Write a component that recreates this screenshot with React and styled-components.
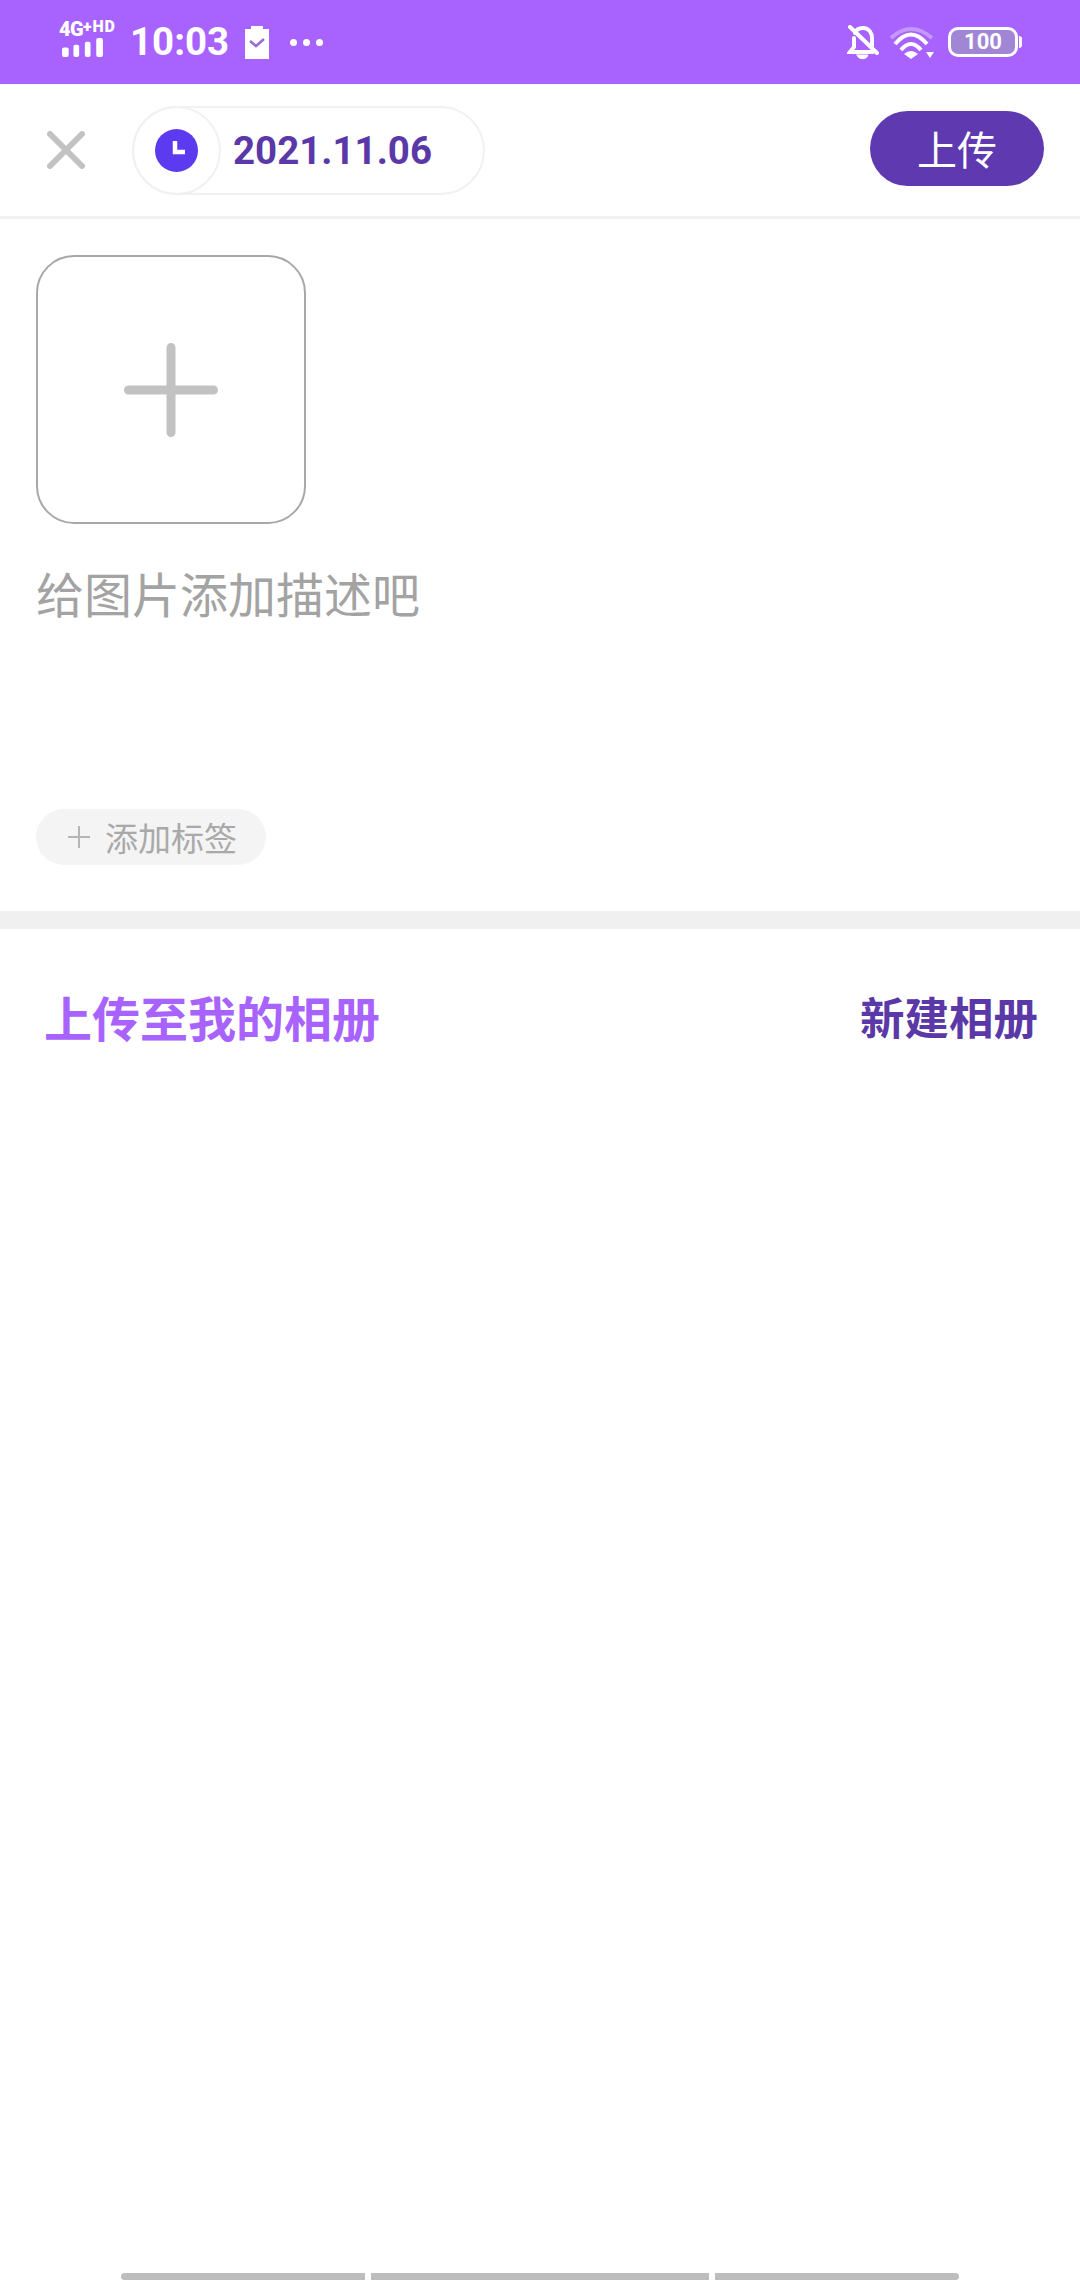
import React from "react";
import styled, { createGlobalStyle } from "styled-components";

const GlobalStyle = createGlobalStyle`
  html, body {
    margin: 0;
    padding: 0;
    background: #fff;
  }
  body {
    font-family: Roboto, "Noto Sans CJK SC", sans-serif;
  }
  * {
    box-sizing: border-box;
  }
`;

const Page = styled.div`
  width: 1080px;
  height: 2280px;
  display: flex;
  flex-direction: column;
  background: #fff;
  overflow: hidden;
`;

const StatusBar = styled.div`
  height: 84px;
  flex: none;
  display: flex;
  align-items: center;
  justify-content: space-between;
  padding: 0 58px 0 60px;
  background: #a862fe;
  color: #fff;
`;

const StatusGroup = styled.div`
  display: flex;
  align-items: center;
`;

const Signal = styled.div`
  width: 58px;
  height: 36px;
  margin: -6px 12px 0 0;
  display: flex;
  flex-direction: column;
`;

const NetworkLabel = styled.div`
  font-size: 20px;
  line-height: 15px;
  font-weight: 900;
  white-space: nowrap;
  letter-spacing: -0.6px;
  margin: 0 0 1px -1px;
  sup {
    font-size: 16px;
    line-height: 12px;
    vertical-align: 4px;
    letter-spacing: 0.8px;
  }
`;

const Time = styled.div`
  font-size: 38.500px;
  line-height: 44px;
  font-weight: 700;
  margin-right: 16px;
`;

const Dots = styled.div`
  display: flex;
  gap: 6px;
  margin-left: 21px;
`;

const Dot = styled.span`
  width: 7px;
  height: 7px;
  border-radius: 50%;
  background: #fff;
`;

const Bell = styled.div`
  display: flex;
  margin-right: 10px;
`;

const Battery = styled.div`
  display: flex;
  align-items: center;
  margin-left: 13px;
`;

const BatteryBody = styled.div`
  width: 70px;
  height: 30px;
  border: 3px solid #fff;
  border-radius: 10px;
  background: linear-gradient(#a186d6, #a186d6) padding-box;
  display: flex;
  align-items: center;
  justify-content: center;
  font-size: 22px;
  line-height: 24px;
  font-weight: 700;
`;

const BatteryNub = styled.span`
  width: 3px;
  height: 12px;
  margin-left: 1px;
  border-radius: 0 3px 3px 0;
  background: #fff;
`;

const Header = styled.div`
  height: 135px;
  flex: none;
  display: flex;
  align-items: center;
  padding: 0 36px 0 47px;
  border-bottom: 3px solid #f0f0f0;
`;

const CloseButton = styled.button`
  width: 38px;
  height: 38px;
  padding: 0;
  margin-right: 47px;
  border: none;
  background: none;
  display: flex;
`;

const DatePill = styled.div`
  width: 353px;
  height: 89px;
  display: flex;
  align-items: center;
  border: 2px solid #f1f1f1;
  border-radius: 45px;
`;

const ClockRing = styled.div`
  width: 89px;
  height: 89px;
  margin: -2px 12px -2px -2px;
  flex: none;
  display: flex;
  align-items: center;
  justify-content: center;
  border: 2px solid #f1f1f1;
  border-radius: 50%;
`;

const DateText = styled.span`
  font-size: 38.500px;
  line-height: 44px;
  padding-top: 2px;
  font-weight: 700;
  color: #5b38a8;
`;

const UploadButton = styled.button`
  width: 174px;
  height: 75px;
  margin: 0 0 3px auto;
  padding: 0;
  border: none;
  border-radius: 38px;
  background: #5f39b0;
  color: #fff;
  font-family: "Noto Sans CJK SC", sans-serif;
  font-size: 40px;
  line-height: 75px;
`;

const Composer = styled.div`
  height: 710px;
  flex: none;
  display: flex;
  flex-direction: column;
  align-items: flex-start;
  padding: 36px 36px 0;
  border-bottom: 18px solid #f0f0f0;
`;

const AddImage = styled.div`
  width: 270px;
  height: 269px;
  display: flex;
  align-items: center;
  justify-content: center;
  border: 2px solid #a8a8a8;
  border-radius: 38px;
`;

const Description = styled.div`
  margin-top: 35px;
  font-family: "Noto Sans CJK SC", sans-serif;
  font-size: 48px;
  line-height: 66px;
  font-weight: 400;
  color: #a3a3a3;
`;

const TagButton = styled.div`
  width: 230px;
  height: 56px;
  margin-top: 184px;
  display: flex;
  align-items: center;
  padding-left: 31px;
  gap: 14px;
  border-radius: 28px;
  background: #f4f4f4;
  font-family: "Noto Sans CJK SC", sans-serif;
  font-size: 33px;
  line-height: 56px;
  color: #a9a9a9;
`;

const AlbumRow = styled.div`
  display: flex;
  align-items: center;
  justify-content: space-between;
  padding: 52px 42px 0 44px;
  font-family: "Noto Sans CJK SC", sans-serif;
  font-weight: 700;
`;

const AlbumTitle = styled.div`
  font-size: 48px;
  line-height: 70px;
  color: #a862fe;
`;

const NewAlbum = styled.div`
  font-size: 44.500px;
  line-height: 70px;
  color: #5b38a8;
`;

const NavSegments = styled.div`
  margin-top: auto;
  display: flex;
  justify-content: center;
  gap: 6px;
`;

const NavSegment = styled.div`
  width: ${(p) => p.$width}px;
  height: 7px;
  background: #bdbdbd;
  border-radius: ${(p) => p.$radius || "0"};
`;

const SignalBars = () => (
  <svg width="44" height="20" viewBox="0 0 44 20" fill="#fff">
    <rect x="1" y="10" width="7" height="10" rx="2" />
    <rect x="13" y="7" width="6" height="13" rx="2" />
    <rect x="25" y="4" width="6" height="16" rx="2" />
    <rect x="37" y="0" width="7" height="20" rx="2" />
  </svg>
);

const TaskIcon = () => (
  <svg width="24" height="33" viewBox="0 0 24 33">
    <path d="M0 3h6V0h12v3h6v30H0z" fill="#fff" />
    <path d="M5 15l6 5 8-7" fill="none" stroke="#9a6bd6" strokeWidth="2.500" />
  </svg>
);

const MutedBell = () => (
  <svg width="32" height="35" viewBox="0 0 32 35" fill="none" stroke="#fff" strokeWidth="4" strokeLinecap="round">
    <path d="M8 8c1-3 4-5 8-5 6 0 9 5 9 10v8" />
    <path d="M7 13v9l-4 5h23" />
    <path d="M10 30h11c-1 5-10 5-11 0z" fill="#fff" strokeWidth="1" />
    <path d="M3 2l27 26" />
  </svg>
);

const WifiIcon = () => (
  <svg width="46" height="34" viewBox="0 0 46 34" fill="none" strokeWidth="4">
    <path d="M2 13Q22-5 43 13" stroke="#fff" strokeOpacity="0.35" />
    <path d="M6 19Q22 0 38 19" stroke="#fff" />
    <path d="M12 25Q22 13 32 25" stroke="#fff" />
    <path d="M15 29Q22 23 29 29L22 34z" fill="#fff" stroke="none" />
    <path d="M37 27h8l-4 6z" fill="#fff" stroke="none" />
  </svg>
);

const CloseIcon = () => (
  <svg width="38" height="38" viewBox="0 0 38 38" stroke="#c2c2c2" strokeWidth="6" strokeLinecap="round">
    <path d="M3 3l32 32M35 3L3 35" />
  </svg>
);

const ClockIcon = () => (
  <svg width="43" height="43" viewBox="0 0 43 43">
    <circle cx="21.500" cy="21.500" r="21.500" fill="#5c3af0" />
    <path d="M20 12v11h10" fill="none" stroke="#fff" strokeWidth="4.500" />
  </svg>
);

const PlusIcon = ({ size, weight, color, round }) => (
  <svg width={size} height={size} viewBox={`0 0 ${size} ${size}`} stroke={color} strokeWidth={weight} strokeLinecap={round ? "round" : "butt"}>
    <path d={`M${size / 2} ${weight / 2}V${size - weight / 2}M${weight / 2} ${size / 2}H${size - weight / 2}`} />
  </svg>
);

const App = () => {
  return (
    <Page>
      <GlobalStyle />
      <StatusBar>
        <StatusGroup>
          <Signal>
            <NetworkLabel>
              4G<sup>+HD</sup>
            </NetworkLabel>
            <SignalBars />
          </Signal>
          <Time>10:03</Time>
          <TaskIcon />
          <Dots>
            <Dot />
            <Dot />
            <Dot />
          </Dots>
        </StatusGroup>
        <StatusGroup>
          <Bell>
            <MutedBell />
          </Bell>
          <WifiIcon />
          <Battery>
            <BatteryBody>100</BatteryBody>
            <BatteryNub />
          </Battery>
        </StatusGroup>
      </StatusBar>

      <Header>
        <CloseButton>
          <CloseIcon />
        </CloseButton>
        <DatePill>
          <ClockRing>
            <ClockIcon />
          </ClockRing>
          <DateText>2021.11.06</DateText>
        </DatePill>
        <UploadButton>上传</UploadButton>
      </Header>

      <Composer>
        <AddImage>
          <PlusIcon size={94} weight={9} color="#c2c2c2" round />
        </AddImage>
        <Description>给图片添加描述吧</Description>
        <TagButton>
          <PlusIcon size={24} weight={2} color="#b5b5b5" />
          添加标签
        </TagButton>
      </Composer>

      <AlbumRow>
        <AlbumTitle>上传至我的相册</AlbumTitle>
        <NewAlbum>新建相册</NewAlbum>
      </AlbumRow>

      <NavSegments>
        <NavSegment $width={244} $radius="4px 0 0 4px" />
        <NavSegment $width={338} />
        <NavSegment $width={244} $radius="0 4px 4px 0" />
      </NavSegments>
    </Page>
  );
};

export default App;
